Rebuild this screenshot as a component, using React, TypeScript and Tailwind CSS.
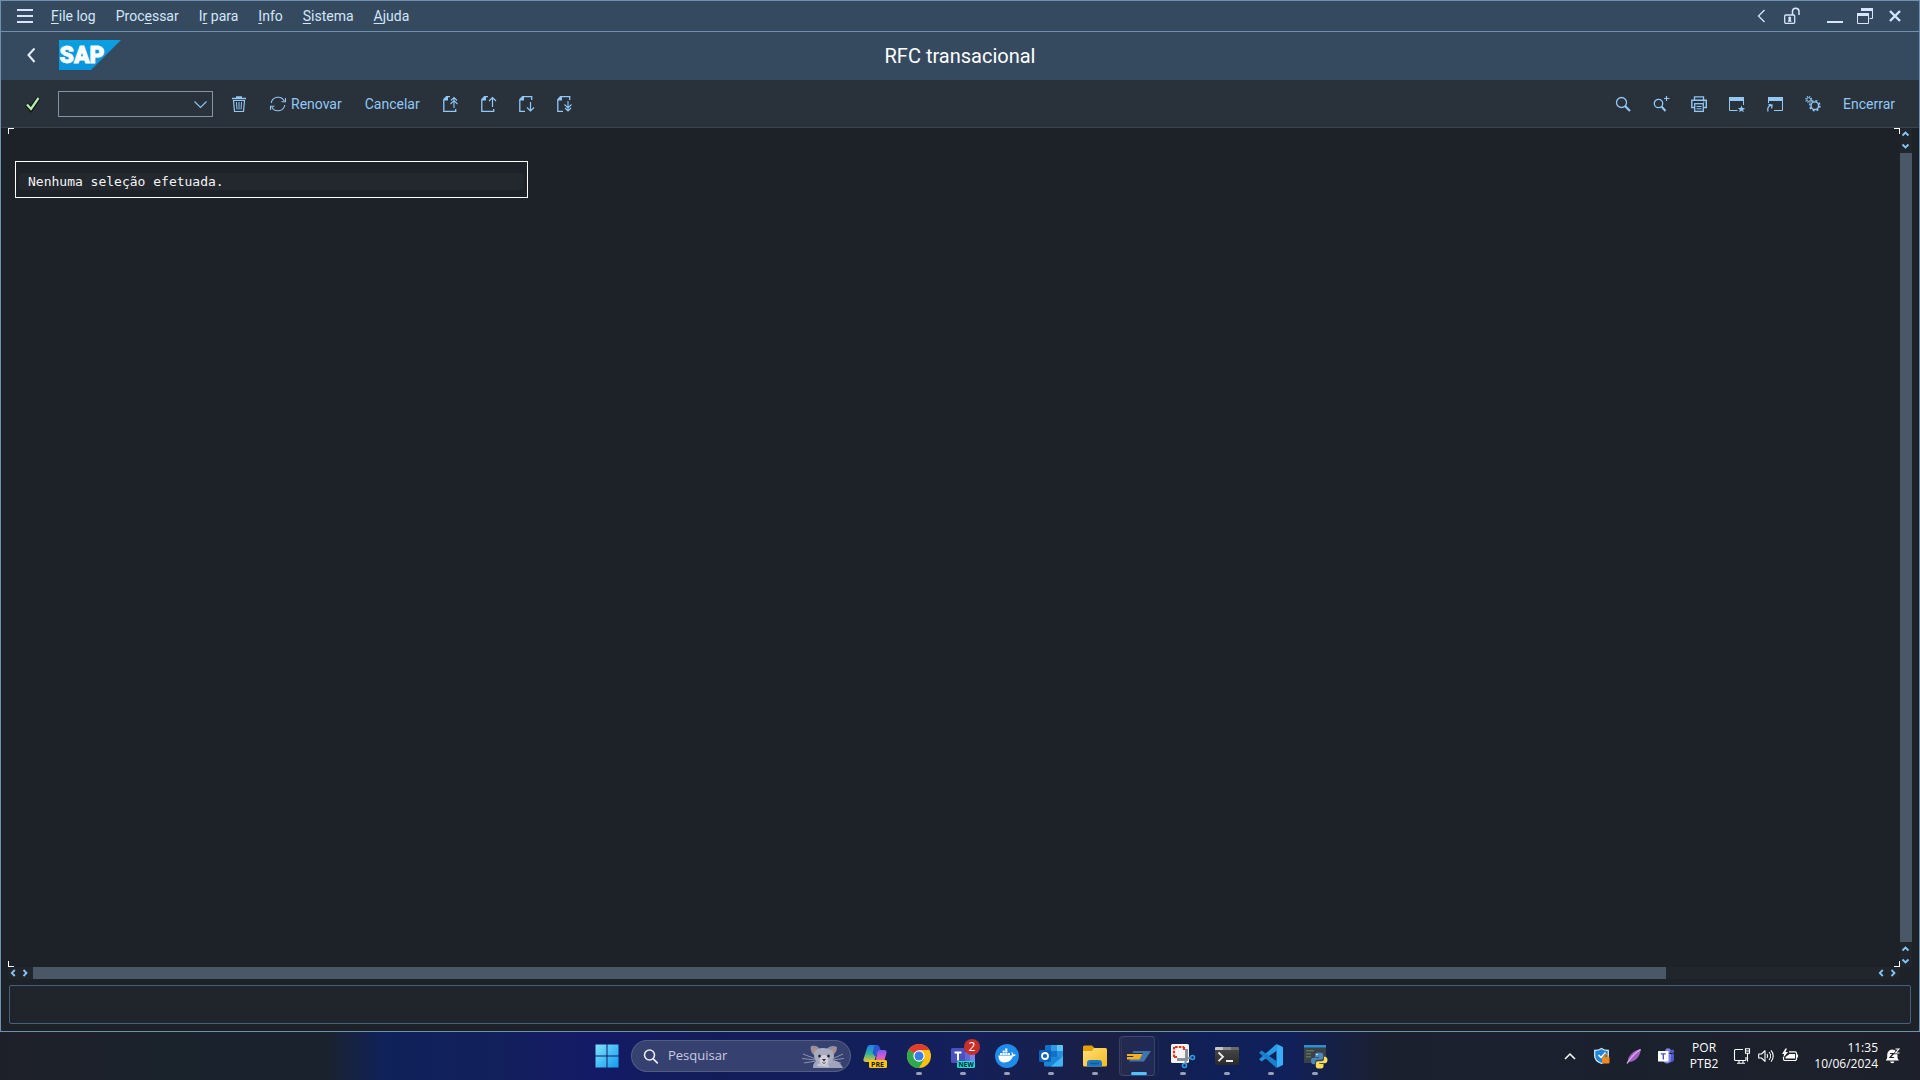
import type { ReactNode } from "react";

type IconProps = { children: ReactNode; size?: "sm" | "lg"; className?: string };

function Icon({ children, size = "sm", className = "" }: IconProps) {
  const lg = size === "lg";
  return (
    <svg
      viewBox={lg ? "0 0 24 24" : "0 0 16 16"}
      className={`${lg ? "size-6" : "size-4"} shrink-0 overflow-visible ${className}`}
      fill="none"
      stroke="currentColor"
      aria-hidden="true"
    >
      {children}
    </svg>
  );
}

function IconButton({ label, children }: { label: string; children: ReactNode }) {
  return (
    <button type="button" aria-label={label} className="flex shrink-0 items-center">
      <Icon>{children}</Icon>
    </button>
  );
}

const menus = [
  { before: "", key: "F", after: "ile log" },
  { before: "Proc", key: "e", after: "ssar" },
  { before: "I", key: "r", after: " para" },
  { before: "", key: "I", after: "nfo" },
  { before: "", key: "S", after: "istema" },
  { before: "", key: "A", after: "juda" },
];

function MenuBar() {
  return (
    <header className="flex h-[31px] shrink-0 items-center border-b border-[#7190b0] bg-[#354a5f] pr-4 pl-4 text-[#d3e6fb]">
      <button type="button" aria-label="Menu" className="mr-[18px] flex flex-col gap-1">
        <span className="h-0.5 w-4 bg-current" />
        <span className="h-0.5 w-4 bg-current" />
        <span className="h-0.5 w-4 bg-current" />
      </button>
      <nav className="flex gap-5 text-sm">
        {menus.map((m) => (
          <button type="button" key={m.after} className="whitespace-pre">
            {m.before}
            <u className="underline-offset-2">{m.key}</u>
            {m.after}
          </button>
        ))}
      </nav>
      <div className="ml-auto flex items-center">
        <div className="mr-[27px] flex gap-[15px]">
          <IconButton label="Recolher">
            <path d="M11.5 2 5.5 8l6 6" strokeWidth="1.3" />
          </IconButton>
          <IconButton label="Desbloqueado">
            <rect x="0.7" y="7" width="10" height="8.3" rx="1" strokeWidth="1.3" />
            <path d="M8.5 7V3.5a3.2 3.2 0 0 1 6.5 0V7" strokeWidth="1.5" />
            <path d="M5.7 8.5a1.5 1.5 0 0 1 1 2.6l.9 2.6H3.8l.9-2.6a1.5 1.5 0 0 1 1-2.6z" fill="currentColor" stroke="none" />
          </IconButton>
        </div>
        <div className="flex gap-3.5">
          <IconButton label="Minimizar">
            <path d="M0 14h16" strokeWidth="2" />
          </IconButton>
          <IconButton label="Restaurar">
            <path d="M4.5 3V1.5h11v9H12.5" />
            <path d="M4 1.5h12" strokeWidth="3" />
            <path d="M.5 6v9.5h11V6" />
            <path d="M0 6.5h12" strokeWidth="3" />
          </IconButton>
          <IconButton label="Fechar">
            <path d="m3 3 10 10M13 3 3 13" strokeWidth="2.4" />
          </IconButton>
        </div>
      </div>
    </header>
  );
}

function TitleBar() {
  return (
    <div className="grid h-12 shrink-0 grid-cols-[1fr_auto_1fr] items-center bg-[#354a5f] pl-[22px] pr-[22px]">
      <div className="flex items-center gap-5 pb-0.5">
        <button type="button" aria-label="Voltar" className="text-[#e3effc]">
          <Icon>
            <path d="M11.500 1.500 5.500 8l6 7" strokeWidth="2" />
          </Icon>
        </button>
        <svg viewBox="0 0 62 30" className="h-[30px] w-[62px]" role="img" aria-label="SAP">
          <defs>
            <linearGradient id="sap" x1="0" y1="0" x2="0" y2="1">
              <stop offset="0" stopColor="#0aa0e0" />
              <stop offset="1" stopColor="#0a94dc" />
            </linearGradient>
          </defs>
          <path d="M0 0h62L32 30H0z" fill="url(#sap)" />
          <text x="0.500" y="23" fill="#fff" stroke="#fff" strokeWidth="0.8" fontFamily="Roboto" fontWeight="900" fontSize="23">
            SAP
          </text>
        </svg>
      </div>
      <h1 className="font-['Roboto',sans-serif] text-xl text-white">RFC transacional</h1>
    </div>
  );
}

const page = <path d="M7 .7H3.500L.8 3.500V15.300h11.900V13" strokeWidth="1.300" />;
const pageFold = <path d="M1 4.500V3.500L3.500 1H5v3.500z" fill="currentColor" stroke="none" />;
const pageDown = <path d="M12.700 4V.7H3.500L.8 3.500V15.300H6" strokeWidth="1.300" />;

function Toolbar() {
  return (
    <div className="flex h-12 shrink-0 items-center gap-[23px] border-b border-[#3b444e] bg-[#29313a] pl-[23px] pr-6 text-sm text-[#91c8f6]">
      <div className="flex items-center gap-[18px]">
        <button type="button" aria-label="Confirmar">
          <Icon>
            <path d="m3 8.500 4 4.500 7.500-11" stroke="#101418" strokeWidth="4.500" />
            <path d="m3 8.500 4 4.500 7.500-11" stroke="#b5ecaa" strokeWidth="2.300" />
          </Icon>
        </button>
        <label className="flex h-[26px] w-[155px] items-center border border-[#8396a8] pr-1">
          <input aria-label="Código de transação" className="min-w-0 flex-1 bg-transparent px-1 outline-none" />
          <Icon>
            <path d="m2.500 5.500 6 6 6-6" strokeWidth="1.100" />
          </Icon>
        </label>
        <IconButton label="Eliminar">
          <path d="M1 2.500h14M5 1h6" strokeWidth="1.300" />
          <path d="m2.500 4.500 1 11h9l1-11z" strokeWidth="1.200" />
          <path d="m5.500 6 .5 7.500M8 6v7.500M10.500 6l-.5 7.500" />
        </IconButton>
      </div>
      <button type="button" className="flex items-center gap-[5px]">
        <Icon>
          <path d="M1.200 7A7 7 0 0 1 14.300 5M14.800 9A7 7 0 0 1 1.700 11" strokeWidth="1.100" />
          <path d="M15.500 2v3.800h-4M.5 14v-3.800h4" strokeWidth="1.100" />
        </Icon>
        Renovar
      </button>
      <button type="button">Cancelar</button>
      <div className="flex items-center gap-[22px]">
        <IconButton label="Primeira página">
          {page}
          {pageFold}
          <path d="M11 12V1.500M8 4.500l3-3 3 3M7.500 8 11 4.700 14.500 8" strokeWidth="1.100" />
        </IconButton>
        <IconButton label="Página anterior">
          {page}
          {pageFold}
          <path d="M11.500 11V1.500M8 5l3.500-3.500L15 5" strokeWidth="1.200" />
        </IconButton>
        <IconButton label="Página seguinte">
          {pageDown}
          {pageFold}
          <path d="M11.500 6v9M8 11.500l3.500 3.500 3.500-3.500" strokeWidth="1.200" />
        </IconButton>
        <IconButton label="Última página">
          {pageDown}
          {pageFold}
          <path d="M11 5v10M8 12l3 3 3-3M7.500 8.500 11 12l3.500-3.500" strokeWidth="1.100" />
        </IconButton>
      </div>

      <div className="ml-auto flex items-center gap-[22px]">
        <IconButton label="Procurar">
          <circle cx="6.500" cy="6.500" r="5" strokeWidth="1.300" />
          <path d="m10 10 5 5" strokeWidth="2.200" />
        </IconButton>
        <IconButton label="Continuar procura">
          <circle cx="5.500" cy="7.500" r="4.200" strokeWidth="1.300" />
          <path d="m8.500 10.500 4 4.500" strokeWidth="2" />
          <path d="M13.500 0v5M11 2.500h5.500" strokeWidth="1.200" />
        </IconButton>
        <IconButton label="Imprimir">
          <path d="M3.500 4V.8h9V4" strokeWidth="1.300" />
          <path d="M3.500 11.500H.8V4.300h14.500v7.200h-2.800" strokeWidth="1.400" />
          <rect x="3.700" y="7.700" width="8.600" height="7.700" strokeWidth="1.300" />
          <path d="M5.500 10.500h5M5.500 12.800h5M12 6h1.500" />
        </IconButton>
        <IconButton label="Novo modo">
          <path d="M8.500 14.500h-8V1.500h14V9" />
          <path d="M0 3h15" strokeWidth="4" />
          <path d="m12.500 9.500 1 2.500h2.700l-2.100 1.700.8 2.500-2.400-1.500-2.400 1.500.8-2.500L8.800 12h2.700z" fill="currentColor" stroke="none" />
        </IconButton>
        <IconButton label="Criar atalho">
          <path d="M1.500 7V1.500h14v13H7" />
          <path d="M1 3h15" strokeWidth="4" />
          <path d="M1 15.500c-.8-3 0-5.500 3.500-6.300M1.500 8.500l3.500.5-.3 3.500" strokeWidth="1.300" />
        </IconButton>
        <IconButton label="Opções">
          <circle cx="3.700" cy="3.500" r="1.900" />
          <circle cx="3.700" cy="3.500" r="2.900" strokeWidth="1.200" strokeDasharray="1.200 1.100" />
          <circle cx="9.800" cy="9.700" r="3.800" strokeWidth="1.400" />
          <circle cx="9.800" cy="9.700" r="5.100" strokeWidth="1.500" strokeDasharray="2 2" />
        </IconButton>
        <button type="button">Encerrar</button>
      </div>
    </div>
  );
}

function Arrow({ d, label }: { d: string; label: string }) {
  return (
    <button type="button" aria-label={label} className="size-3 shrink-0">
      <svg viewBox="0 0 12 12" className="size-3" fill="none" stroke="#86c6fa" strokeWidth="1.8">
        <path d={d} />
      </svg>
    </button>
  );
}

const arrows = {
  up: "M2.500 7.500l3-3 3 3",
  down: "M2.500 4.500l3 3 3-3",
  left: "M6.800 3l-3 3 3 3",
  right: "M3.500 3l3 3-3 3",
};

function ListArea() {
  return (
    <main className="grid min-h-0 flex-1 grid-cols-[1fr_12px] grid-rows-[1fr_12px] pl-[7px] pr-[7px]">
      <section className="relative pl-[7px] pt-[33px]">
        <span className="absolute top-0 left-0 size-1.5 border-t border-l border-white" />
        <span className="absolute top-0 right-0 size-1.5 border-t border-r border-white" />
        <span className="absolute bottom-0 left-0 size-1.5 border-b border-l border-white" />
        <span className="absolute right-0 bottom-0 size-1.5 border-r border-b border-white" />
        <div className="flex h-[37px] w-[513px] items-center border border-white px-[3px] pt-1">
          <p className="w-full rounded-sm bg-[#23282f] pl-[9px] font-['DejaVu_Sans_Mono',monospace] text-[13px] leading-[17px] text-[#f4f4f4]">
            Nenhuma seleção efetuada.
          </p>
        </div>
      </section>
      <div className="flex flex-col bg-[#20262c]">
        <Arrow d={arrows.up} label="Linha acima" />
        <Arrow d={arrows.down} label="Linha abaixo" />
        <div className="my-px flex-1 bg-[#4a5766]" />
        <Arrow d={arrows.up} label="Página acima" />
        <Arrow d={arrows.down} label="Página abaixo" />
      </div>
      <div className="flex bg-[#20262c]">
        <Arrow d={arrows.left} label="Coluna à esquerda" />
        <Arrow d={arrows.right} label="Coluna à direita" />
        <div className="ml-px flex-1">
          <div className="h-full w-[88.600%] bg-[#4a5766]" />
        </div>
        <Arrow d={arrows.left} label="Página à esquerda" />
        <Arrow d={arrows.right} label="Página à direita" />
      </div>
    </main>
  );
}

function TaskButton({ label, children, running, active }: { label: string; children: ReactNode; running?: boolean; active?: boolean }) {
  return (
    <button type="button" aria-label={label} className="relative flex h-12 w-11 items-center justify-center">
      {active && (
        <>
          <span className="absolute top-1 left-1 h-10 w-[38px] rounded border border-white/5" />
          <span className="absolute top-1 left-0.5 h-10 w-9 rounded border border-white/10 bg-white/5" />
        </>
      )}
      <Icon size="lg" className="relative">
        {children}
      </Icon>
      {running && !active && <span className="absolute bottom-[5px] h-[3px] w-1.5 rounded-full bg-[#9a9fb8]" />}
      {active && <span className="absolute bottom-[5px] h-[3px] w-4 rounded-full bg-[#4cc2ff]" />}
    </button>
  );
}

function Gradients() {
  return (
    <svg className="absolute size-0" aria-hidden="true">
      <defs>
        <linearGradient id="win" x1="0" y1="0" x2="1" y2="1">
          <stop offset="0" stopColor="#7ee3fb" />
          <stop offset="1" stopColor="#119bf0" />
        </linearGradient>
        <linearGradient id="copA" x1="0" y1="0" x2="0" y2="1">
          <stop offset="0" stopColor="#1d7ff0" />
          <stop offset=".5" stopColor="#31b0a0" />
          <stop offset="1" stopColor="#f0c52c" />
        </linearGradient>
        <linearGradient id="copB" x1="0" y1="0" x2="0" y2="1">
          <stop offset="0" stopColor="#7a5cf0" />
          <stop offset=".5" stopColor="#d35bd0" />
          <stop offset="1" stopColor="#f4795a" />
        </linearGradient>
        <linearGradient id="fold" x1="0" y1="0" x2="1" y2="1">
          <stop offset="0" stopColor="#ffe07a" />
          <stop offset="1" stopColor="#f6b91f" />
        </linearGradient>
        <linearGradient id="code" x1="0" y1="0" x2="0" y2="1">
          <stop offset="0" stopColor="#2fa4ec" />
          <stop offset="1" stopColor="#1f8cdb" />
        </linearGradient>
        <linearGradient id="term" x1="0" y1="0" x2="0" y2="1">
          <stop offset="0" stopColor="#4a4a4a" />
          <stop offset="1" stopColor="#2a2a2a" />
        </linearGradient>
      </defs>
    </svg>
  );
}

function Taskbar() {
  return (
    <footer className="relative grid h-12 shrink-0 grid-cols-[1fr_auto_1fr] items-center bg-[linear-gradient(90deg,#1e2029_0%,#1a222c_8%,#1a222e_17%,#10225a_20%,#12205c_26%,#141a66_31%,#121d58_37%,#13205a_50%,#1a1f44_58%,#0f2058_63%,#10205a_67%,#1b202f_72%,#1a212d_85%,#1d202a_100%)] pl-0.5 font-['Open_Sans',sans-serif]">
      <Gradients />
      <div className="col-start-2 flex items-center">
        <TaskButton label="Iniciar">
          <g fill="url(#win)" stroke="none">
            <path d="M.5.500h11v11H.5zM12.500.500h11v11h-11zM.5 12.500h11v11H.5zM12.500 12.500h11v11h-11z" />
          </g>
        </TaskButton>
        <label className="mx-0.5 flex h-8 w-[220px] items-center rounded-full border border-white/15 bg-[#36416f] pl-[11px] pr-1.5">
          <Icon className="text-[#e8ebf5]">
            <circle cx="6.500" cy="7" r="5" strokeWidth="1.600" />
            <path d="m10.300 10.800 4 4" strokeWidth="1.700" strokeLinecap="round" />
          </Icon>
          <input
            aria-label="Pesquisar"
            placeholder="Pesquisar"
            className="ml-[9px] min-w-0 flex-1 bg-transparent text-[13px] outline-none placeholder:text-[#c9cde0]"
          />
          <svg viewBox="0 0 42 24" className="h-6 w-[42px]" aria-hidden="true">
            <path d="M11 24c0-5 2-7 6-8h12c7 0 10 4 12 8z" fill="#9fa3bb" />
            <path d="M15 22c1-3 3-5 6-5s5 2 6 6z" fill="#c9cad6" />
            <path d="M9 2c4-1 7 0 9 3l-6 6C9 9 8 5 9 2zM35 3c-4-2-8-1-10 2l6 6c3-2 4-5 4-8z" fill="#8e92a8" />
            <path d="M10.500 3.500c2.500 0 4 .8 5 2.500l-3.500 3.500c-1.500-1.500-2-4-1.500-6zM33.500 4.500c-2.500-.5-4 .3-5.500 2l3 3.500c1.500-1.500 2.500-3.500 2.500-5.500z" fill="#b48f84" />
            <path d="M12 11c0-5 4-7 9.500-7S32 7 32 12s-5 9-10 9-10-4-10-10z" fill="#a9acc0" />
            <path d="M18 14c1-4 7-4 8 0 1 5-1 7-4 7s-5-2-4-7z" fill="#d0d1dc" />
            <ellipse cx="17.500" cy="12" rx="1.300" ry="1.600" fill="#22222c" />
            <ellipse cx="26.500" cy="12" rx="1.300" ry="1.600" fill="#22222c" />
            <path d="M20 15h4l-2 2.500z" fill="#2a2530" />
            <path d="M20.500 18.500c1 1 2 1 3 0" stroke="#5a3a3a" fill="none" />
            <path d="M14 15 1 10M14 16 0 14.500M14 17 2 19M30 15l11-5M30 16l12-1.500M30 17l9 2" stroke="#a3a6ba" strokeWidth=".8" fill="none" />
          </svg>
        </label>
        <TaskButton label="Copilot">
          <g stroke="none">
            <path d="M7 1h6c2 0 3 1 2.500 3L12 15c-.5 2-1.500 3-3 3H3c-2 0-3-1-2.500-3L4 4c.6-2 1.500-3 3-3z" fill="url(#copA)" />
            <path d="M16 6h5c2 0 3 1 2.500 3l-2 7c-.6 2-2 3-3.500 3h-6l2-9c.5-3 .8-4 2-4z" fill="url(#copB)" />
            <path d="M13 1c2 0 3.500 1 4 3l.5 2c-3 0-3.500 1-4 3l-1 4-3-4 1.500-6c.3-1 .8-2 2-2z" fill="#2a56d8" />
            <rect x="6" y="16" width="18" height="8" rx="1.500" fill="#f9c513" />
          </g>
          <text x="8" y="22.500" fontSize="7" fontWeight="700" fontFamily="Open Sans" fill="#1d1a08" stroke="none">
            PRE
          </text>
        </TaskButton>
        <TaskButton label="Chrome" running>
          <g stroke="none">
            <circle cx="12" cy="12" r="12" fill="#fbc116" />
            <path d="M12 12 1.600 6A12 12 0 0 1 22.400 6z" fill="#e33b2e" />
            <path d="M1.600 6A12 12 0 0 0 12 24l5.200-9-5.200-3z" fill="#2da94f" />
            <path d="M12 6h10.400l-5.200 9z" fill="#fbc116" />
            <circle cx="12" cy="12" r="5.700" fill="#fff" />
            <circle cx="12" cy="12" r="4.500" fill="#3a7cec" />
          </g>
        </TaskButton>
        <TaskButton label="Microsoft Teams" running>
          <g stroke="none">
            <circle cx="19" cy="5" r="3.500" fill="#5b62d6" />
            <path d="M10 8h14v9a5 5 0 0 1-5 5h-9z" fill="#7b83eb" />
            <path d="M10 8h9v11h-9z" fill="#6169d8" />
            <rect x="0" y="4" width="14" height="15" rx="1.500" fill="#4a52bd" />
            <path d="M3.500 7.500h7v2H8v7H6v-7H3.500z" fill="#fff" />
            <rect x="6" y="17" width="18" height="7" rx="1.500" fill="#20dcd8" />
            <circle cx="21" cy="3" r="8" fill="#c92f26" />
          </g>
          <text x="7.500" y="22.800" fontSize="6.500" fontWeight="700" fontFamily="Open Sans" fill="#06282b" stroke="none">
            NEW
          </text>
          <text x="21" y="7.200" fontSize="12" textAnchor="middle" fontFamily="Open Sans" fill="#fff" stroke="none">
            2
          </text>
        </TaskButton>
        <TaskButton label="Docker" running>
          <g stroke="none">
            <circle cx="12" cy="12" r="12" fill="#1d8cea" />
            <path d="M3.500 11.500h13.200c.3-1.500.1-2.500-.6-3.500 1.300.3 2 1.200 2.200 2.300 1-.2 1.900 0 2.500.5-.5 1-1.500 1.500-2.900 1.500C16.500 16.500 13.500 18.500 9.500 18.500c-4 0-6.300-2.500-6-7z" fill="#fff" />
            <path d="M5 9h2.200v2H5zM7.600 9h2.200v2H7.600zM10.200 9h2.200v2h-2.200zM12.800 9H15v2h-2.200zM7.600 6.600h2.200v2H7.600zM10.200 6.600h2.200v2h-2.200zM10.200 4.500h2.200v1.800h-2.200z" fill="#fff" />
          </g>
        </TaskButton>
        <TaskButton label="Outlook" running>
          <g stroke="none">
            <path d="M7 1h16a1 1 0 0 1 1 1v13H6V2a1 1 0 0 1 1-1z" fill="#1271c4" />
            <path d="M12 1h6v6h-6z" fill="#2f9be8" />
            <path d="M18 1h5a1 1 0 0 1 1 1v5h-6z" fill="#58c7f5" />
            <path d="M18 7h6v6h-6z" fill="#2a8fe0" />
            <path d="M5 13h19v8a1.500 1.500 0 0 1-1.500 1.500h-16A1.500 1.500 0 0 1 5 21z" fill="#1a86d8" />
            <path d="m24 12-12 10.500h10.500A1.500 1.500 0 0 0 24 21z" fill="#43b4f3" />
            <rect x="0" y="6" width="12" height="12" rx="1.200" fill="#0d62b8" />
          </g>
          <circle cx="6" cy="12" r="3" stroke="#fff" strokeWidth="1.800" />
        </TaskButton>
        <TaskButton label="Explorador de Arquivos" running>
          <g stroke="none">
            <path d="M0 3a1.500 1.500 0 0 1 1.500-1.500H9L11.500 4H22v5H0z" fill="#e3a008" />
            <path d="M0 7h9l2-3h11.500A1.500 1.500 0 0 1 24 5.500V21a1.500 1.500 0 0 1-1.500 1.500h-21A1.500 1.500 0 0 1 0 21z" fill="url(#fold)" />
            <path d="M4 22.500V19a3 3 0 0 1 3-3h9a3 3 0 0 1 3 3v3.500z" fill="#1a78c8" />
            <path d="M7 19.500h9" stroke="#125a9c" strokeWidth="1.600" />
          </g>
        </TaskButton>
        <TaskButton label="SAP Logon" running active>
          <g stroke="none">
            <path d="M6.500 7H24l-7 10.500H2L4 14h9l3-5H5z" fill="#3f74ad" />
            <path d="M0 10h15.500l-3 5.500H0V13h6l.5-1H0z" fill="#f3b11f" />
          </g>
        </TaskButton>
        <TaskButton label="Ferramenta de Captura" running>
          <rect x="0" y="0" width="18" height="19" rx="1.500" fill="#f3f3f5" stroke="none" />
          <path d="M3 13V3h10" stroke="#d83b1e" strokeWidth="2.200" strokeDasharray="2.600 1.100" />
          <path d="M13 3v3M3 13h3" stroke="#d83b1e" strokeWidth="2.200" />
          <path d="M15.500 5v10.500H6" stroke="#8d9096" strokeWidth="3" />
          <path d="m14 14.500 5.500-.5M14.500 15v4.500" stroke="#8a8d94" strokeWidth="2" />
          <circle cx="21.500" cy="13.500" r="2" stroke="#2b9fe6" strokeWidth="1.600" />
          <circle cx="13.500" cy="21.500" r="2" stroke="#2b9fe6" strokeWidth="1.600" />
        </TaskButton>
        <TaskButton label="Terminal" running>
          <g stroke="none">
            <rect x="0" y="3" width="24" height="18" rx="1.200" fill="url(#term)" />
            <path d="M0 4.200A1.200 1.200 0 0 1 1.200 3H8v3H0z" fill="#c5c5c5" />
            <path d="M8 3h8v3H8z" fill="#8c8c8c" />
            <path d="M16 3h6.800A1.200 1.200 0 0 1 24 4.200V6h-8z" fill="#6a6a6a" />
          </g>
          <path d="m3.500 8.500 4.500 4.300-4.500 4.300M11 17h7" stroke="#eee" strokeWidth="1.800" />
        </TaskButton>
        <TaskButton label="Visual Studio Code" running>
          <g stroke="none">
            <path d="m17.500 0 6.500 3v18l-6.500 3z" fill="#35aef5" />
            <path d="M17.500 0 0 15.200l2.600 2.400L18 6.500z" fill="url(#code)" />
            <path d="M17.500 24 0 8.800l2.600-2.400L18 17.500z" fill="#1b80cc" />
          </g>
        </TaskButton>
        <TaskButton label="Python" running>
          <g stroke="none">
            <rect x="1" y="1" width="22" height="18" fill="#3b4247" />
            <path d="M1 1h22v2.500H1z" fill="#2b8fd0" />
            <path d="M3 6h8v1.500H3zM3 9h5v1.500H3zM3 12h5v1.500H3z" fill="#56745a" />
            <path d="M16 8.500c-3 0-4 .9-4 2.300V13h4.200v.8H10.500C9 13.800 8 15 8 17s1 3.300 2.500 3.300H12V18c0-1.300 1-2.300 2.300-2.300h3.900c1.100 0 2-.9 2-2v-2.900c0-1.400-1.200-2.300-4.200-2.300z" fill="#4a86bf" />
            <path d="M16.500 24.500c3 0 4-.9 4-2.300V20h-4.200v-.8H22c1.500 0 2.500-1.200 2.500-3.200s-1-3.300-2.500-3.300h-1v2.300c0 1.300-1 2.300-2.300 2.300h-3.900c-1.100 0-2 .9-2 2v2.900c0 1.400 1.200 2.300 3.700 2.300z" fill="#fbdc55" />
            <circle cx="14" cy="10.500" r=".8" fill="#fff" />
          </g>
        </TaskButton>
      </div>

      <div className="flex items-center justify-end gap-4 pr-[19px] text-white">
        <div className="flex gap-4">
          <IconButton label="Mostrar ícones ocultos">
            <path d="m3 11 5-5 5 5" strokeWidth="1.500" />
          </IconButton>
          <IconButton label="Segurança">
            <path d="M7.500.5C9.500 2 12 2.500 14.300 2.500V8c0 3.500-3 6-6.800 7.500C3.700 14 .7 11.500.7 8V2.500C3 2.500 5.500 2 7.500.5z" fill="#2185d8" stroke="#cde6f8" strokeWidth="1.300" />
            <path d="m4.500 7 2.500 2.500 4.500-5" stroke="#fff" strokeWidth="1.500" />
            <rect x="8" y="9" width="7.500" height="6.500" rx=".8" fill="#f38b1c" stroke="none" />
            <path d="M10 9V7.800a1.800 1.800 0 0 1 3.600 0V9" stroke="#f38b1c" strokeWidth="1.200" />
          </IconButton>
          <IconButton label="Anotações">
            <path d="M15 1C9 2 3 6 2 12l-1 3.500 2-1.500c6 0 11-5 12-13z" fill="#a15fc4" stroke="none" />
            <path d="M14.500 1.500C9 5 5 9 1 15.500" stroke="#e0b3ee" strokeWidth="1.200" />
          </IconButton>
          <IconButton label="Teams">
            <g stroke="none">
              <circle cx="10" cy="3" r="2.800" fill="#7b83eb" />
              <circle cx="14.300" cy="3.500" r="1.900" fill="#5059c9" />
              <path d="M11 6h5v5.500a3 3 0 0 1-4 2.500z" fill="#5059c9" />
              <path d="M5 6h8v5.500c0 2.500-2 4-4 4s-4-1.500-4-4z" fill="#7b83eb" />
              <rect x="0" y="3" width="10.500" height="10.500" rx=".6" fill="#fff" />
              <path d="M2.800 5.200h5v1.300H6v5H4.600v-5H2.800z" fill="#4b53bc" />
            </g>
          </IconButton>
        </div>
        <button type="button" className="text-center text-xs leading-4">
          POR
          <br />
          PTB2
        </button>
        <div className="flex gap-2">
          <IconButton label="Rede">
            <path d="M9 1.500H1.500A1 1 0 0 0 .5 2.500v9a1 1 0 0 0 1 1H11a1 1 0 0 0 1-1V9M5 12.500V15M9 12.500V15M3 15.300h8" strokeWidth="1.100" />
            <path d="M11.500.8h4v4.500h-4zM13.500 5.500v8" strokeWidth="1.100" />
            <path d="M12 3h3" />
          </IconButton>
          <IconButton label="Volume">
            <path d="M.7 6v4h2.800l3.500 3.300V2.700L3.500 6z" strokeWidth="1.100" strokeLinejoin="round" />
            <path d="M9 6a3.500 3.500 0 0 1 0 4M11 4a6 6 0 0 1 0 8M13 2.300a8.500 8.500 0 0 1 0 11.400" strokeWidth="1.100" />
          </IconButton>
          <IconButton label="Bateria">
            <path d="M7 3.800h6a1.500 1.500 0 0 1 1.500 1.500V11a1.500 1.500 0 0 1-1.500 1.500H3A1.500 1.500 0 0 1 1.500 11V9" strokeWidth="1.200" />
            <path d="M7.500 6H13v4.500H3.500V9z" fill="currentColor" stroke="none" />
            <path d="M15.500 6.500v3" strokeWidth="1.200" />
            <path d="M3.500.5 0 6h2L1.500 9.500 6 4H3.500L5 .5z" fill="currentColor" stroke="none" />
          </IconButton>
        </div>
        <div className="flex items-center gap-[7px]">
          <button type="button" className="text-right text-xs leading-4">
            11:35
            <br />
            10/06/2024
          </button>
          <button type="button" aria-label="Notificações">
            <Icon>
              <g fill="currentColor" stroke="none">
                <path d="M7 1.500A5.300 5.300 0 0 0 2.200 7v3L.8 12.500h13L12.500 10V7.500A5.300 5.300 0 0 0 7 1.500zM5 13.500a2.300 2.300 0 0 0 4.500 0z" />
              </g>
              <path d="M5 5.500h3.500L5 9.500h4" stroke="#1d202a" strokeWidth="1.200" />
              <path d="M10.500 1h3.500l-3.500 4h4" stroke="#1d202a" strokeWidth="2.500" />
              <path d="M10.500 1h3.500l-3.500 4h4" strokeWidth="1.100" />
            </Icon>
          </button>
        </div>
      </div>
    </footer>
  );
}

export default function App() {
  return (
    <div className="flex h-screen flex-col bg-[#1c202b] font-['Roboto',sans-serif]">
      <div className="flex min-h-0 flex-1 flex-col border border-[#7190b0] bg-[#1d2228]">
        <MenuBar />
        <TitleBar />
        <Toolbar />
        <ListArea />
        <div
          role="status"
          className="mx-2 mt-1.5 mb-[7px] h-[39px] shrink-0 rounded-xs border border-[#46617d] bg-[#1f252b]"
        />
      </div>
      <Taskbar />
    </div>
  );
}
